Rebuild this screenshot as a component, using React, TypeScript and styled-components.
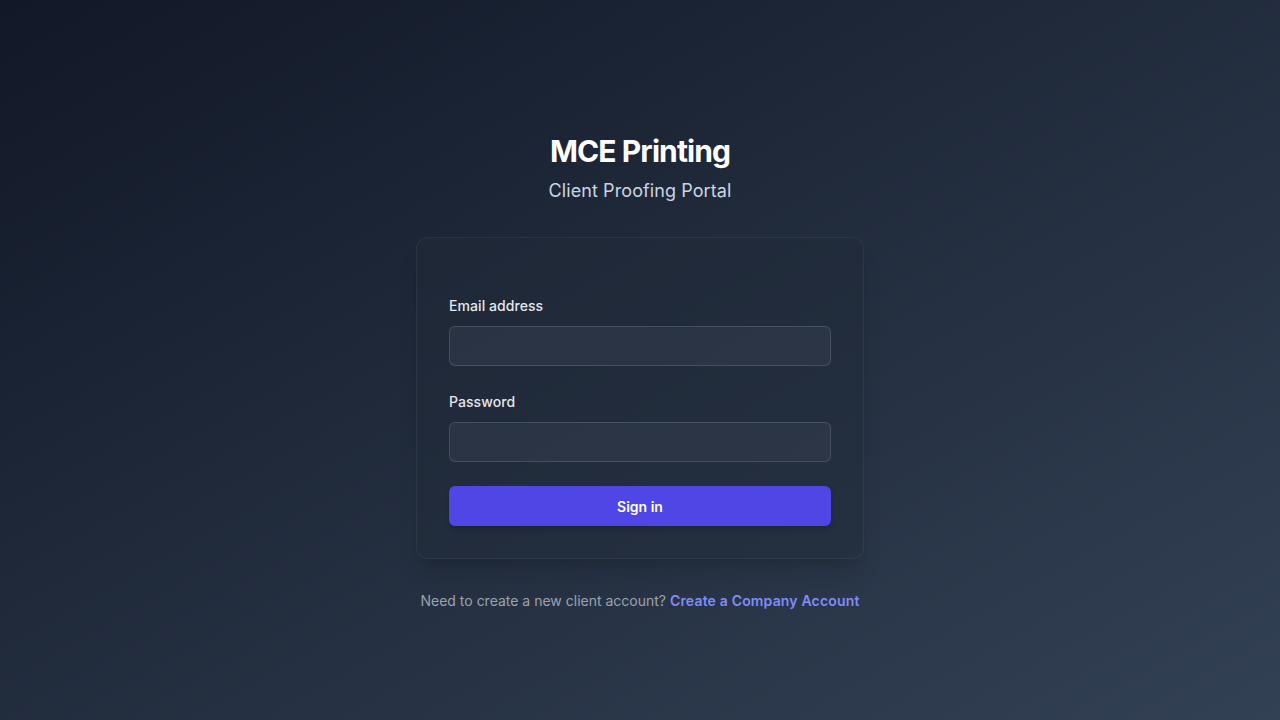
import React from "react";
import styled, { createGlobalStyle } from "styled-components";

const GlobalStyle = createGlobalStyle`
  * { box-sizing: border-box; }
  html, body { margin: 0; padding: 0; }
  body {
    font-family: Inter, "Noto Sans", sans-serif;
    -webkit-font-smoothing: antialiased;
  }
`;

const Page = styled.main`
  min-height: 100vh;
  background: linear-gradient(to bottom right, #111827, #334155);
  display: flex;
  flex-direction: column;
  align-items: center;
  padding-top: 133px;
`;

const Header = styled.header`
  display: flex;
  flex-direction: column;
  align-items: center;
`;

const Title = styled.h1`
  margin: 0;
  font-size: 30px;
  line-height: 36px;
  font-weight: 700;
  letter-spacing: -0.03em;
  color: #ffffff;
`;

const Subtitle = styled.p`
  margin: 8px 0 0;
  font-size: 18px;
  line-height: 28px;
  letter-spacing: 0.005em;
  color: #cbd5e1;
`;

const Card = styled.form`
  margin-top: 32px;
  width: 448px;
  padding: 58px 32px 32px;
  background: rgba(31, 41, 55, 0.5);
  border: 1px solid rgba(255, 255, 255, 0.06);
  border-radius: 12px;
  box-shadow: 0 20px 25px -5px rgba(0, 0, 0, 0.12), 0 8px 10px -6px rgba(0, 0, 0, 0.1);
  display: flex;
  flex-direction: column;
`;

const Field = styled.div<{ $mb: number }>`
  display: flex;
  flex-direction: column;
  margin-bottom: ${(p) => p.$mb}px;
`;

const Label = styled.label`
  font-size: 14px;
  line-height: 20px;
  font-weight: 500;
  letter-spacing: 0.005em;
  color: #e5e7eb;
`;

const Input = styled.input`
  margin-top: 10px;
  height: 40px;
  width: 100%;
  border-radius: 6px;
  border: 1px solid rgba(107, 114, 128, 0.45);
  background: rgba(55, 65, 81, 0.45);
  color: #fff;
  font-family: inherit;
  font-size: 14px;
  padding: 0 12px;
  outline: none;
`;

const Button = styled.button`
  height: 40px;
  width: 100%;
  border: none;
  border-radius: 6px;
  background: #4f46e5;
  color: #ffffff;
  font-family: inherit;
  font-size: 14px;
  font-weight: 600;
  box-shadow: 0 4px 6px -1px rgba(0, 0, 0, 0.15), 0 2px 4px -2px rgba(0, 0, 0, 0.1);
  cursor: pointer;
`;

const Footer = styled.p`
  margin: 32px 0 0;
  font-size: 14px;
  line-height: 20px;
  color: #9ca3af;
`;

const Link = styled.a`
  color: #818cf8;
  font-weight: 600;
  letter-spacing: 0.012em;
  text-decoration: none;
`;

export default function App() {
  return (
    <>
      <GlobalStyle />
      <Page>
        <Header>
          <Title>MCE Printing</Title>
          <Subtitle>Client Proofing Portal</Subtitle>
        </Header>
        <Card onSubmit={(e) => e.preventDefault()}>
          <Field $mb={26}>
            <Label htmlFor="email">Email address</Label>
            <Input id="email" type="email" />
          </Field>
          <Field $mb={24}>
            <Label htmlFor="password">Password</Label>
            <Input id="password" type="password" />
          </Field>
          <Button type="submit">Sign in</Button>
        </Card>
        <Footer>
          Need to create a new client account? <Link href="#">Create a Company Account</Link>
        </Footer>
      </Page>
    </>
  );
}
